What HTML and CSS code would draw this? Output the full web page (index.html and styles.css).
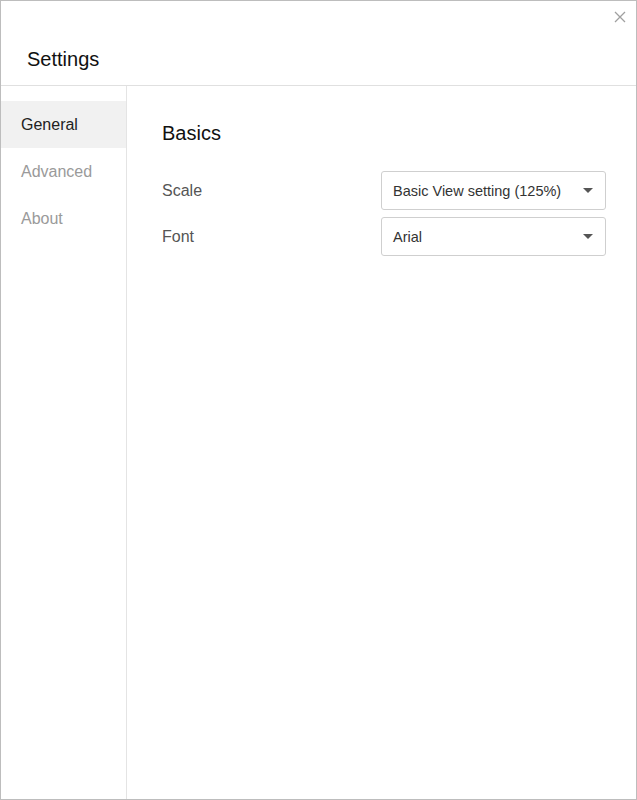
FILE: index.html
```html
<!DOCTYPE html>
<html lang="en">
<head>
  <meta charset="UTF-8" />
  <title>Settings</title>
  <link rel="stylesheet" href="styles.css">
</head>
<body>

<div class="window">
  <header class="title-bar">
    <h1>Settings</h1>
    <button class="close-btn" aria-label="Close">
      <svg width="12" height="12" viewBox="0 0 12 12">
        <path d="M1 1 L11 11 M11 1 L1 11" stroke="#a0a0a0" stroke-width="1.3" fill="none"/>
      </svg>
    </button>
  </header>

  <div class="body">
    <nav class="sidebar">
      <div class="nav-item active">General</div>
      <div class="nav-item">Advanced</div>
      <div class="nav-item">About</div>
    </nav>

    <main class="content">
      <h2>Basics</h2>
      <div class="row">
        <span class="label">Scale</span>
        <div class="select">
          <span>Basic View setting (125%)</span>
          <span class="caret"></span>
        </div>
      </div>
      <div class="row">
        <span class="label">Font</span>
        <div class="select">
          <span>Arial</span>
          <span class="caret"></span>
        </div>
      </div>
    </main>
  </div>
</div>

</body>
</html>
```

FILE: styles.css
```css
* { box-sizing: border-box; margin: 0; padding: 0; }

body {
  font-family: "Liberation Sans", Arial, sans-serif;
  background: #fff;
  color: #222;
}

.window {
  width: 637px;
  height: 800px;
  border: 1px solid #bdbdbd;
  display: flex;
  flex-direction: column;
  background: #fff;
}

.title-bar {
  position: relative;
  height: 85px;
  border-bottom: 1px solid #e0e0e0;
  padding: 46px 0 0 26px;
}

.title-bar h1 {
  font-size: 20px;
  font-weight: normal;
  line-height: 24px;
  color: #111;
}

.close-btn {
  position: absolute;
  top: 10px;
  right: 10px;
  width: 12px;
  height: 12px;
  border: none;
  background: none;
  display: flex;
}

.body {
  flex: 1;
  display: flex;
}

.sidebar {
  width: 126px;
  border-right: 1px solid #e4e4e4;
  padding-top: 15px;
}

.nav-item {
  height: 47px;
  line-height: 47px;
  padding-left: 20px;
  font-size: 16px;
  color: #9a9a9a;
}

.nav-item.active {
  background: #f1f1f1;
  color: #222;
}

.content {
  flex: 1;
  padding: 35px 30px 0 35px;
}

.content h2 {
  font-size: 20px;
  font-weight: normal;
  line-height: 24px;
  color: #111;
  margin-bottom: 26px;
}

.row {
  display: flex;
  align-items: center;
  height: 39px;
  margin-bottom: 7px;
}

.label {
  flex: 1;
  font-size: 16px;
  color: #555;
}

.select {
  width: 225px;
  height: 39px;
  border: 1px solid #cfcfcf;
  border-radius: 3px;
  display: flex;
  align-items: center;
  justify-content: space-between;
  padding: 0 12px 0 11px;
  font-size: 14.5px;
  color: #333;
}

.caret {
  width: 0;
  height: 0;
  border-left: 5px solid transparent;
  border-right: 5px solid transparent;
  border-top: 5px solid #555;
}
```
